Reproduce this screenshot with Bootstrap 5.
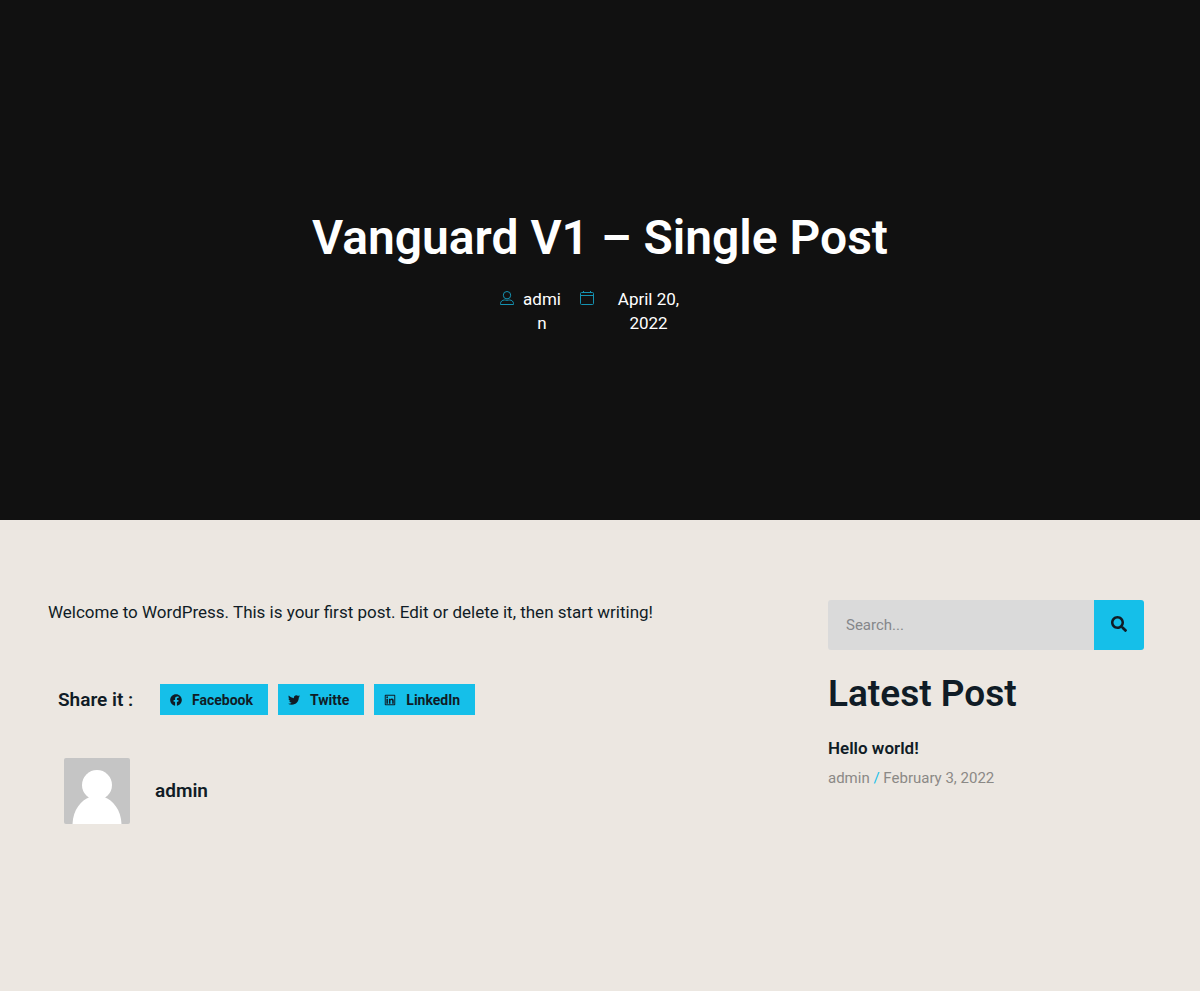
<!DOCTYPE html>
<html lang="en">
<head>
<meta charset="utf-8">
<meta name="viewport" content="width=device-width, initial-scale=1">
<title>Vanguard V1 – Single Post</title>
<link href="https://cdn.jsdelivr.net/npm/bootstrap@5.3.0/dist/css/bootstrap.min.css" rel="stylesheet">
<style>
  :root { --accent: #15bfe9; --ink: #101c26; }
  body { font-family: Roboto, "Liberation Sans", sans-serif; font-size: 17px; line-height: 24px; color: var(--ink); background: #ece7e1; }
  a { color: inherit; text-decoration: none; }
  .hero { background: #111; color: #fff; padding: 208px 24px 185px; }
  .hero h1 { font-size: 48px; line-height: 60px; font-weight: 600; margin-bottom: 19px; }
  .hero svg { color: #1592b2; margin-top: 4px; }
  .meta-row { padding-right: 16px; }
  .meta-author { width: 39px; margin-left: 9px; word-break: break-all; }
  .meta-date { width: 72px; margin-left: 19px; }
  .meta-icon-gap { margin-left: 18px; }
  .page-body { padding: 80px 48px; }
  .sidebar { padding: 0 8px 0 44px; }
  .share { margin-top: 60px; padding-left: 10px; }
  .share h2 { font-size: 19px; line-height: 24px; font-weight: 600; margin: 0; width: 102px; }
  .share-list { gap: 10px; }
  .btn-share { --bs-btn-color: var(--ink); --bs-btn-bg: var(--accent); --bs-btn-hover-bg: #39cdf1; --bs-btn-border-width: 0; --bs-btn-border-radius: 0; --bs-btn-font-size: 14px; --bs-btn-font-weight: 700; height: 31px; padding: 1px 15px 0 10px; gap: 10px; }
  .author-box { margin-top: 43px; padding-left: 16px; gap: 25px; }
  .author-box h3 { font-size: 19px; line-height: 24px; font-weight: 600; margin: 0; }
  .search .form-control { height: 50px; border: 0; border-radius: 3px 0 0 3px; background: #dadada; font-size: 15px; padding: 0 18px; color: var(--ink); }
  .search .form-control::placeholder { color: #85878a; }
  .search .btn { width: 50px; background: var(--accent); color: var(--ink); border: 0; border-radius: 0 3px 3px 0; padding: 0 0 4px; }
  .sidebar h2 { font-size: 37px; line-height: 44px; font-weight: 600; margin: 22px 0 20px; }
  .sidebar h3 { font-size: 17px; line-height: 24px; font-weight: 600; margin: 0 0 6px; }
  .post-meta { font-size: 15px; line-height: 24px; color: #8b8986; }
  .post-meta span { color: var(--accent); }
</style>
</head>
<body>
<header class="hero text-center">
  <h1>Vanguard V1 – Single Post</h1>
  <div class="meta-row d-flex justify-content-center align-items-start">
    <svg width="14" height="14" viewBox="0 0 14 14" fill="none" stroke="currentColor" aria-hidden="true"><circle cx="7" cy="4.200" r="3.700"/><path d="M.5 13.500v-.8c0-2.200 1.700-3.700 4-3.700.9 0 1.500.3 2.500.3s1.600-.3 2.500-.3c2.300 0 4 1.500 4 3.700v.8z"/></svg>
    <a class="meta-author" href="#">admin</a>
    <svg class="meta-icon-gap" width="14" height="14" viewBox="0 0 14 14" fill="none" stroke="currentColor" aria-hidden="true"><rect x=".5" y="1.500" width="13" height="12" rx="1"/><path d="M.5 4.500h13M3.500 0v2M10.500 0v2"/></svg>
    <a class="meta-date" href="#">April 20, 2022</a>
  </div>
</header>
<div class="page-body">
  <div class="row g-0">
    <main class="col-8">
      <p class="m-0">Welcome to WordPress. This is your first post. Edit or delete it, then start writing!</p>
      <div class="share d-flex align-items-center">
        <h2>Share it :</h2>
        <div class="share-list d-flex">
          <button type="button" class="btn btn-share d-flex align-items-center"><svg width="12" height="12" viewBox="0 0 512 512" fill="currentColor" aria-hidden="true"><path d="M504 256C504 119 393 8 256 8S8 119 8 256c0 123.800 90.700 226.400 209.300 245V327.700h-63V256h63v-54.600c0-62.200 37-96.500 93.700-96.500 27.100 0 55.500 4.800 55.500 4.800v61h-31.300c-30.800 0-40.400 19.100-40.400 38.700V256h68.800l-11 71.700h-57.800V501C413.300 482.400 504 379.800 504 256z"/></svg>Facebook</button>
          <button type="button" class="btn btn-share d-flex align-items-center"><svg width="12" height="12" viewBox="0 0 512 512" fill="currentColor" aria-hidden="true"><path d="M459.400 151.700c.3 4.500.3 9.100.3 13.600 0 138.700-105.600 298.600-298.600 298.600-59.500 0-114.700-17.200-161.100-47.100 8.400 1 16.600 1.300 25.300 1.300 49.100 0 94.200-16.600 130.300-44.800-46.100-1-84.800-31.200-98.100-72.800 6.500 1 13 1.600 19.800 1.600 9.400 0 18.800-1.300 27.600-3.600-48.100-9.700-84.100-52-84.100-103v-1.300c14 7.800 30.200 12.700 47.400 13.300-28.300-18.800-46.800-51-46.800-87.400 0-19.500 5.200-37.400 14.300-53 51.700 63.700 129.300 105.300 216.400 109.800-1.600-7.800-2.600-15.900-2.600-24 0-57.800 46.800-104.900 104.900-104.900 30.200 0 57.500 12.700 76.700 33.100 23.700-4.500 46.500-13.300 66.600-25.300-7.800 24.400-24.400 44.800-46.100 57.800 21.100-2.300 41.600-8.100 60.400-16.200-14.300 20.800-32.200 39.300-52.600 54.300z"/></svg>Twitte</button>
          <button type="button" class="btn btn-share d-flex align-items-center"><svg width="12" height="12" viewBox="-24 0 496 512" fill="currentColor" aria-hidden="true"><path fill-rule="evenodd" d="M32 32h384c18 0 32 14 32 32v384c0 18-14 32-32 32H32c-18 0-32-14-32-32V64c0-18 14-32 32-32zM42 74v364h364V74z"/><path d="M69 202h66v214H69zM102 96a38 38 0 1 1 0 77 38 38 0 0 1 0-77zM177 202h64v29c9-17 31-35 63-35 67 0 80 45 80 102v118h-66V312c0-25-1-57-35-57s-40 27-40 55v106h-66z"/></svg>LinkedIn</button>
        </div>
      </div>
      <div class="author-box d-flex align-items-center">
        <svg width="66" height="66" viewBox="0 0 66 66" role="img" aria-label="admin"><rect width="66" height="66" rx="2" fill="#c5c5c5"/><g fill="#fff"><circle cx="33" cy="27" r="15"/><path d="M8.500 66C9 52 17 42 26 39h14c9 3 17 13 17.500 27z"/></g></svg>
        <h3>admin</h3>
      </div>
    </main>
    <aside class="sidebar col-4">
      <form class="search d-flex" role="search">
        <input class="form-control" type="search" placeholder="Search..." aria-label="Search">
        <button class="btn flex-shrink-0" type="submit" aria-label="Search"><svg width="16" height="16" viewBox="0 0 512 512" fill="currentColor" aria-hidden="true"><path d="M505 442.700L405.300 343c-4.500-4.500-10.600-7-17-7H372c27.600-35.300 44-79.700 44-128C416 93.100 322.900 0 208 0S0 93.100 0 208s93.100 208 208 208c48.300 0 92.700-16.400 128-44v16.300c0 6.400 2.500 12.500 7 17l99.700 99.700c9.400 9.400 24.600 9.400 33.900 0l28.300-28.300c9.400-9.400 9.400-24.600.1-34zM208 336c-70.700 0-128-57.200-128-128 0-70.700 57.200-128 128-128 70.700 0 128 57.200 128 128 0 70.700-57.200 128-128 128z"/></svg></button>
      </form>
      <h2>Latest Post</h2>
      <h3><a href="#">Hello world!</a></h3>
      <div class="post-meta">admin <span>/</span> February 3, 2022</div>
    </aside>
  </div>
</div>
<script src="https://cdn.jsdelivr.net/npm/bootstrap@5.3.0/dist/js/bootstrap.bundle.min.js"></script>
</body>
</html>
